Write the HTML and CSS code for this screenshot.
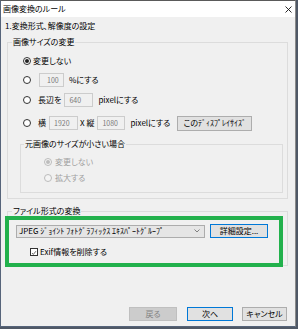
FILE: index.html
```html
<!DOCTYPE html>
<html lang="ja">
<head>
  <meta charset="UTF-8" />
  <meta name="viewport" content="width=device-width, initial-scale=1.0" />
  <link rel="stylesheet" href="styles.css">
  <title>画像変換のルール</title>
</head>
<body>
  <div class="dialog">
    <div class="titlebar">
      <span>画像変換のルール</span>
      <svg class="close" width="7" height="7" viewBox="0 0 7 7"><path d="M0.5 0.5L6.5 6.5M6.5 0.5L0.5 6.5" stroke="#111" stroke-width="0.9" fill="none"/></svg>
    </div>

    <div class="content">
      <div class="step">1.変換形式、解像度の設定</div>

      <fieldset class="group size-group">
        <legend>画像サイズの変更</legend>
        <div class="row r1"><span class="radio checked"></span><span class="tight">変更しない</span></div>
        <div class="row r2"><span class="radio"></span><span class="field w25 pad7">100</span><span class="after">%にする</span></div>
        <div class="row r3"><span class="radio"></span><span>長辺を</span><span class="field w29">640</span><span class="after">pixelにする</span></div>
        <div class="row r4">
          <span class="radio"></span><span>横</span><span class="field w29">1920</span>
          <span class="mid">X 縦</span><span class="field w28">1080</span>
          <span class="after">pixelにする</span>
          <span class="btn display-btn">このﾃﾞｨｽﾌﾟﾚｲｻｲｽﾞ</span>
        </div>

        <fieldset class="group sub-group">
          <legend>元画像のサイズが小さい場合</legend>
          <div class="row s1 disabled"><span class="radio checked"></span><span>変更しない</span></div>
          <div class="row s2 disabled"><span class="radio"></span><span>拡大する</span></div>
        </fieldset>
      </fieldset>

      <fieldset class="group format-group">
        <legend>ファイル形式の変換</legend>
        <div class="row f1">
          <div class="select">
            <span>JPEG ｼﾞｮｲﾝﾄ ﾌｫﾄｸﾞﾗﾌｨｯｸｽ ｴｷｽﾊﾟｰﾄｸﾞﾙｰﾌﾟ</span>
            <svg width="6" height="4" viewBox="0 0 6 4"><path d="M0.5 0.5L3 3L5.5 0.5" stroke="#666" stroke-width="0.8" fill="none"/></svg>
          </div>
          <span class="btn focus detail-btn">詳細設定...</span>
        </div>
        <div class="row f2">
          <span class="checkbox"><svg width="8" height="8" viewBox="0 0 8 8"><path d="M1.3 4L3.1 5.9L6.6 1.6" stroke="#222" stroke-width="0.9" fill="none"/></svg></span>
          <span>Exif情報を削除する</span>
        </div>
      </fieldset>

      <div class="buttons">
        <span class="btn disabled back-btn">戻る</span>
        <span class="btn focus next-btn">次へ</span>
        <span class="btn cancel-btn">キャンセル</span>
      </div>
    </div>

    <div class="highlight"></div>
  </div>
</body>
</html>
```

FILE: styles.css
```css
* {
  box-sizing: border-box;
}
body {
  margin: 0;
  background: #4f5866;
  font-family: "Noto Sans CJK JP", "Noto Sans", sans-serif;
  font-size: 8px;
  line-height: 10px;
  color: #000;
  font-feature-settings: "palt" 1;
}
.dialog {
  position: relative;
  width: 296px;
  height: 327px;
  background: #f0f0f0;
  border: 1px solid #56647a;
  border-top-color: #5a5a5a;
  border-right-color: #8a8a8a;
  display: flex;
  flex-direction: column;
}
.titlebar {
  height: 16px;
  background: #fff;
  display: flex;
  align-items: center;
  justify-content: space-between;
  padding: 0 3px 0 2px;
}
.content {
  flex: 1;
  display: flex;
  flex-direction: column;
  padding: 0 7px 5px 6px;
}
.step {
  margin: 4px 0 0 -2px;
}

/* group boxes */
fieldset {
  margin: 0;
  min-width: 0;
  border: 1px solid #dcdcdc;
  padding: 0 4px 5px 4px;
}
legend {
  padding: 0 1px;
}
.size-group {
  margin-top: 6px;
}
.sub-group {
  margin: 8px 0 0 8px;
  padding: 0 3px 8px 3px;
}
.format-group {
  margin-top: 7px;
  padding-bottom: 8px;
}

.row {
  display: flex;
  align-items: center;
  height: 16px;
  white-space: nowrap;
}
.r1 { margin-top: 6px; }
.r2 { margin-top: 3px; }
.r3 { margin-top: 4px; }
.r4 { margin-top: 7px; }
.s1 { margin-top: 7px; height: 12px; }
.s2 { margin-top: 4px; height: 12px; }
.f1 { margin-top: 8px; height: 14px; }
.f2 { margin-top: 9px; height: 10px; }

/* radio buttons */
.radio {
  width: 8px;
  height: 8px;
  border: 1px solid #333;
  border-radius: 50%;
  background: #fff;
  margin: 0 7px 0 11px;
  display: flex;
  align-items: center;
  justify-content: center;
  flex: none;
}
.radio.checked::after {
  content: "";
  width: 4px;
  height: 4px;
  border-radius: 50%;
  background: #222;
}
.r1 .radio {
  margin-right: 2px;
}
.sub-group .radio {
  margin: 0 3px 0 20px;
}
.disabled {
  color: #a0a0a0;
}
.disabled .radio {
  border-color: #bcbcbc;
  background: #f4f4f4;
}
.disabled .radio.checked::after {
  background: #bcbcbc;
}

/* disabled number fields */
.field {
  height: 14px;
  border: 1px solid #cccccc;
  background: #f0f0f0;
  color: #7a7a7a;
  font-size: 7px;
  padding-left: 4px;
  display: flex;
  align-items: center;
  margin-left: 3px;
  flex: none;
}
.w25 { width: 25px; margin-left: 1px; }
.w29 { width: 29px; }
.w28 { width: 28px; }
.pad7 { padding-left: 7px; }
.after { margin-left: 5px; }
.mid { margin-left: 2px; }

/* buttons */
.btn {
  display: flex;
  align-items: center;
  justify-content: center;
  height: 14px;
  background: #e1e1e1;
  border: 1px solid #adadad;
  flex: none;
}
.btn.focus {
  border-color: #0078d7;
}
.btn.disabled {
  background: #cccccc;
  border-color: #bfbfbf;
  color: #838383;
}
.display-btn {
  width: 75px;
  height: 15px;
  margin-left: 7px;
}
.detail-btn {
  width: 58px;
  margin-left: 5px;
}

/* combo box */
.select {
  width: 189px;
  height: 13px;
  margin-left: 4px;
  background: #e5e5e5;
  border: 1px solid #acacac;
  display: flex;
  align-items: center;
  justify-content: space-between;
  padding: 0 4px 0 2px;
}

.checkbox {
  width: 8px;
  height: 8px;
  border: 1px solid #333;
  background: #fff;
  margin: 0 2px 0 18px;
  display: flex;
}

.buttons {
  margin-top: auto;
  display: flex;
  justify-content: flex-end;
  padding-right: 1px;
}
.back-btn { width: 48px; }
.next-btn { width: 46px; margin-left: 10px; }
.cancel-btn { width: 45px; margin-left: 9px; }

/* green annotation frame */
.highlight {
  position: absolute;
  left: 4px;
  top: 215px;
  width: 278px;
  height: 51px;
  border: 4px solid #22b14c;
}
```
